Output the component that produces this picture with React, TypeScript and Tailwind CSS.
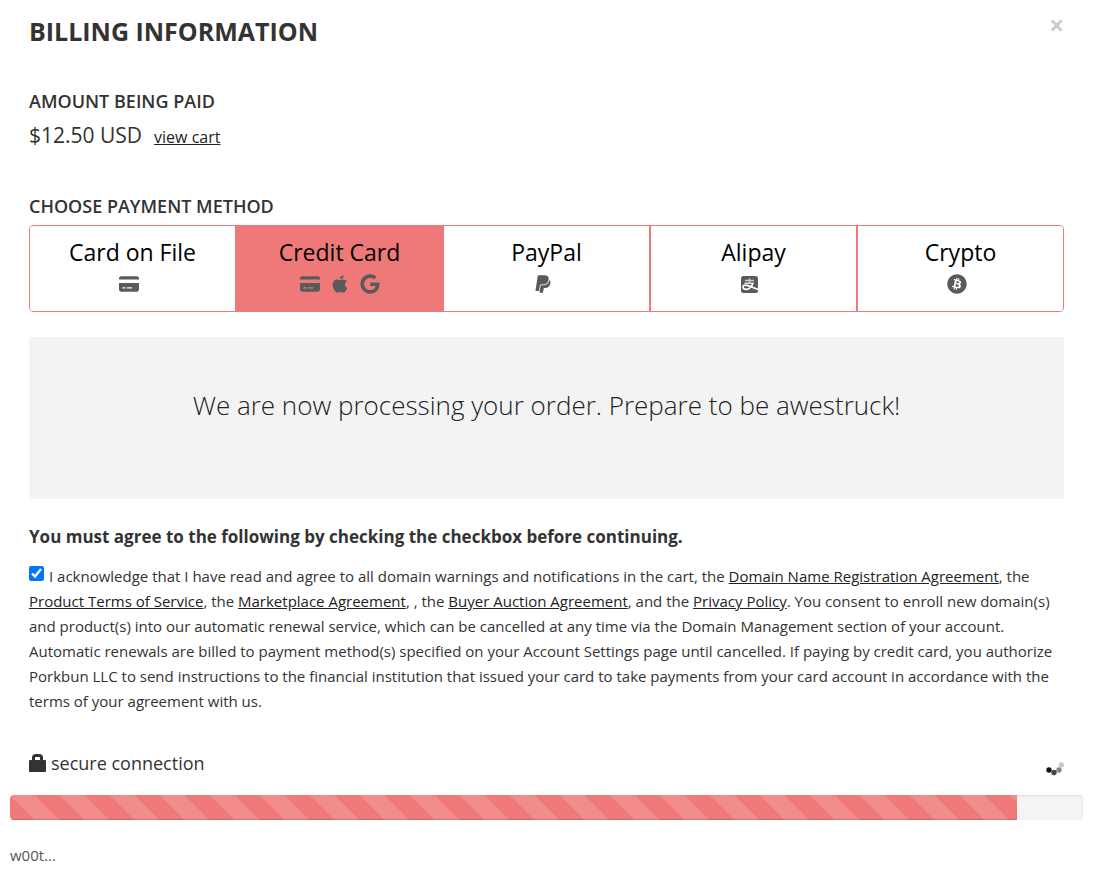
import type { ReactNode } from "react";
import {
  FaApple,
  FaBitcoin,
  FaCreditCard,
  FaGoogle,
  FaPaypal,
} from "react-icons/fa6";

type Method = {
  id: string;
  label: string;
  icons: ReactNode[];
};

const METHODS: Method[] = [
  { id: "file", label: "Card on File", icons: [<FaCreditCard key="card" />] },
  {
    id: "card",
    label: "Credit Card",
    icons: [
      <FaCreditCard key="card" />,
      <FaApple key="apple" />,
      <FaGoogle key="google" />,
    ],
  },
  { id: "paypal", label: "PayPal", icons: [<FaPaypal key="paypal" />] },
  { id: "alipay", label: "Alipay", icons: [<AlipayIcon key="alipay" />] },
  { id: "crypto", label: "Crypto", icons: [<FaBitcoin key="bitcoin" />] },
];

const PROGRESS = 93.85;

function AlipayIcon() {
  return (
    <svg viewBox="0 0 17 17" width="17" height="17" fill="none" stroke="#fff" aria-hidden="true">
      <rect width="17" height="17" rx="2.500" fill="#5a5a5a" stroke="none" />
      <path d="M4 4.500h9M8.500 2.500v4" strokeWidth="1.500" strokeOpacity="0.7" />
      <path d="M3.500 7.200h9" strokeWidth="1.200" />
      <path
        d="M12 7.200C10.800 10.500 8 13.300 5 13.300c-1.800 0-3-.8-3-2.100 0-1.200 1.200-2 2.800-2 2.700 0 6 2.200 12.200 4.300"
        strokeWidth="1.700"
      />
    </svg>
  );
}

function TextLink({ children }: { children: ReactNode }) {
  return (
    <a href="#" className="text-[#222] underline">
      {children}
    </a>
  );
}

function PaymentMethods({ selected }: { selected: string }) {
  return (
    <div className="flex overflow-hidden rounded border border-[#ef7878]">
      {METHODS.map((method) => (
        <button
          key={method.id}
          type="button"
          aria-pressed={method.id === selected}
          className={`flex h-[85px] flex-1 flex-col items-center border-l-2 border-[#ef7878] pt-2 text-black first:border-l-0 ${
            method.id === selected ? "bg-[#ef7878]" : "bg-white"
          }`}
        >
          <span className="text-[23px] leading-9">{method.label}</span>
          <span className="flex h-7 items-center gap-[10px] text-xl text-[#5a5a5a] [&>svg]:w-auto [&>svg:only-child]:mr-2">
            {method.icons}
          </span>
        </button>
      ))}
    </div>
  );
}

function Lock() {
  return (
    <svg viewBox="0 0 17 18" className="h-[18px] w-[17px]" fill="#333" aria-hidden="true">
      <path
        fillRule="evenodd"
        d="M3 6V3.500C3 1.500 4.500 0 6.500 0h4C12.500 0 14 1.500 14 3.500V6h2a1 1 0 0 1 1 1v10a1 1 0 0 1-1 1H1a1 1 0 0 1-1-1V7a1 1 0 0 1 1-1zM6 6h5V4a1 1 0 0 0-1-1H7a1 1 0 0 0-1 1z"
      />
    </svg>
  );
}

function Spinner() {
  return (
    <svg viewBox="0 0 20 20" className="size-5" role="img" aria-label="Loading">
      <circle cx="5" cy="14" r="2.700" fill="#111" />
      <circle cx="10" cy="16.500" r="2.700" fill="#444" />
      <circle cx="15" cy="14" r="2.700" fill="#888" />
      <circle cx="17.300" cy="9" r="2.700" fill="#c8c8c8" />
    </svg>
  );
}

function ProgressBar({ value }: { value: number }) {
  return (
    <div
      role="progressbar"
      aria-label="Order progress"
      aria-valuenow={value}
      className="h-[25px] overflow-hidden rounded bg-[#f4f4f4] shadow-[inset_0_1px_2px_rgba(0,0,0,0.1)]"
    >
      <div
        className="h-full bg-[#ef7878] bg-[linear-gradient(45deg,rgba(255,255,255,0.15)_25%,transparent_25%,transparent_50%,rgba(255,255,255,0.15)_50%,rgba(255,255,255,0.15)_75%,transparent_75%,transparent)] bg-size-[50px_50px] shadow-[inset_0_-1px_0_rgba(0,0,0,0.15)]"
        style={{ width: `${value}%` }}
      />
    </div>
  );
}

export default function App() {
  return (
    <main className="bg-white pt-4 pr-[19px] pb-4 pl-[10px] font-['Open_Sans',sans-serif] text-[15px] leading-[25px] text-[#333]">
      <div className="px-[19px]">
        <header className="flex items-start justify-between">
          <h1 className="text-[25px] leading-[30px] font-bold">BILLING INFORMATION</h1>
          <button
            type="button"
            aria-label="Close"
            className="text-[26px] leading-[18px] font-bold text-[#ccc]"
          >
            ×
          </button>
        </header>

        <section className="mt-[42px]">
          <h2 className="text-lg leading-[26px] font-semibold">AMOUNT BEING PAID</h2>
          <p className="mt-1 flex items-baseline gap-3 text-[21px] leading-[34px]">
            $12.50 USD
            <a href="#" className="text-base leading-[34px] text-[#222] underline">
              view cart
            </a>
          </p>
        </section>

        <section className="mt-[39px]">
          <h2 className="mb-[6px] text-lg leading-[26px] font-semibold">
            CHOOSE PAYMENT METHOD
          </h2>
          <PaymentMethods selected="card" />
        </section>

        <div className="mt-[25px] h-[162px] bg-[#f3f3f3] pt-12 text-center text-[26px] leading-10 font-light text-[#222]">
          We are now processing your order. Prepare to be awestruck!
        </div>

        <section className="mt-[25px]">
          <h3 className="text-[17px] leading-[26px] font-bold">
            You must agree to the following by checking the checkbox before continuing.
          </h3>
          <div className="mt-[14px]">
            <input
              id="agree"
              type="checkbox"
              defaultChecked
              className="mr-[5px] size-[15px] align-[1px]"
            />
            <label htmlFor="agree">
              I acknowledge that I have read and agree to all domain warnings and notifications in
              the cart, the <TextLink>Domain Name Registration Agreement</TextLink>, the{" "}
              <TextLink>Product Terms of Service</TextLink>, the{" "}
              <TextLink>Marketplace Agreement</TextLink>, , the{" "}
              <TextLink>Buyer Auction Agreement</TextLink>, and the{" "}
              <TextLink>Privacy Policy</TextLink>. You consent to enroll new domain(s) and
              product(s) into our automatic renewal service, which can be cancelled at any time via
              the Domain Management section of your account. Automatic renewals are billed to
              payment method(s) specified on your Account Settings page until cancelled. If paying
              by credit card, you authorize Porkbun LLC to send instructions to the financial
              institution that issued your card to take payments from your card account in
              accordance with the terms of your agreement with us.
            </label>
          </div>
        </section>

        <div className="mt-9 flex items-end justify-between">
          <div className="flex items-center gap-[5px] text-lg leading-[26px]">
            <Lock />
            secure connection
          </div>
          <Spinner />
        </div>
      </div>

      <div className="mt-[19px]">
        <ProgressBar value={PROGRESS} />
        <p className="mt-[23px] text-[#555]">w00t...</p>
      </div>
    </main>
  );
}
